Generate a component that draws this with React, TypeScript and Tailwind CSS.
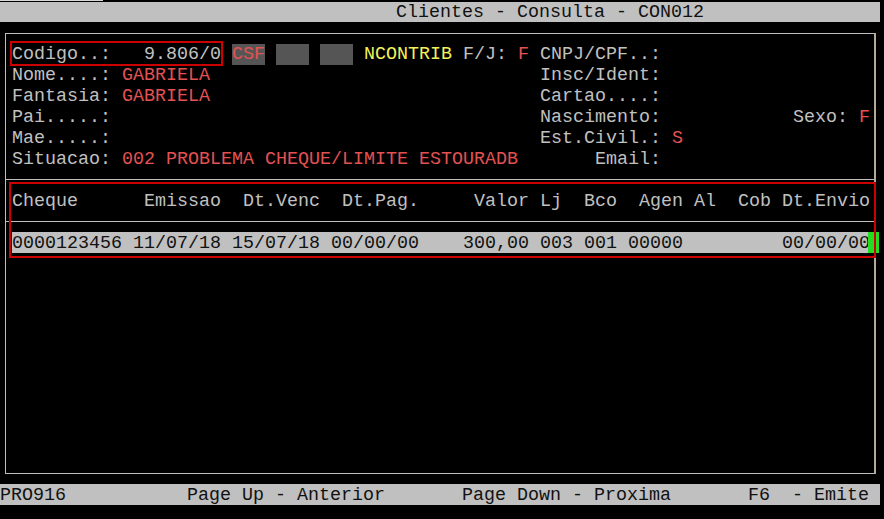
import React from "react";

const sp = (n: number) => " ".repeat(n);

function Line({ children, className = "" }: { children?: React.ReactNode; className?: string }) {
  return <div className={`h-[21px] whitespace-pre pl-[6px] leading-[23px] ${className}`}>{children}</div>;
}

function Red({ children }: { children: React.ReactNode }) {
  return <span className="text-[#e35252]">{children}</span>;
}

function Rule() {
  return (
    <div className="h-[21px] pt-[10px]">
      <div className="h-px bg-[#bdbdbd]" />
    </div>
  );
}

export default function App() {
  return (
    <div className="h-[519px] w-[884px] overflow-hidden bg-black font-['Liberation_Mono','Courier_New',monospace] text-[18.33px] text-[#c0c0c0]">
      <div className="h-[2px]">
        <div className="h-px w-[103px] bg-[#d6d6d6]" />
      </div>

      <div className="h-[20px] w-[880px] whitespace-pre bg-[#c0c0c0] leading-[21px] text-[#111]">
        {sp(36)}Clientes - Consulta - CON012
      </div>

      <div className="ml-[5px] mt-[11px] h-[441px] w-[871px] border-t border-b border-l border-r-2 border-[#bdbdbd] border-r-[#b3ab9a] pt-[9px]">
        <Line>
          <span className="inline-block h-[21px] align-top ring-2 ring-[#cc0000]">{"Codigo..:   9.806/0"}</span>
          {" "}
          <span className="bg-[#555555] text-[#e35252]">CSF</span>
          {" "}
          <span className="bg-[#555555]">{sp(3)}</span>
          {" "}
          <span className="bg-[#555555]">{sp(3)}</span>
          {" "}
          <span className="text-[#f2f25a]">NCONTRIB</span>
          {" F/J: "}
          <Red>F</Red>
          {" CNPJ/CPF..:"}
        </Line>
        <Line>
          {"Nome....: "}
          <Red>GABRIELA</Red>
          {sp(30)}Insc/Ident:
        </Line>
        <Line>
          {"Fantasia: "}
          <Red>GABRIELA</Red>
          {sp(30)}Cartao....:
        </Line>
        <Line>
          {"Pai.....:" + sp(39) + "Nascimento:" + sp(12) + "Sexo: "}
          <Red>F</Red>
        </Line>
        <Line>
          {"Mae.....:" + sp(39) + "Est.Civil.: "}
          <Red>S</Red>
        </Line>
        <Line>
          {"Situacao: "}
          <Red>002 PROBLEMA CHEQUE/LIMITE ESTOURADB</Red>
          {sp(7)}Email:
        </Line>

        <Rule />

        <div className="relative">
          <Line>{"Cheque      Emissao  Dt.Venc  Dt.Pag.     Valor Lj  Bco  Agen Al  Cob Dt.Envio"}</Line>
          <Rule />
          <Line>
            <span className="inline-block h-[21px] bg-[#c0c0c0] align-top text-[#111]">
              {"0000123456 11/07/18 15/07/18 00/00/00    300,00 003 001 00000         00/00/00"}
            </span>
            <span className="-ml-[2px] inline-block h-[21px] w-[11px] bg-[#22dd22] align-top" />
          </Line>
          <div className="absolute -top-[8px] -right-[2px] -bottom-[5px] left-[3px] border-2 border-[#cc0000]" />
        </div>
      </div>

      <div className="mt-[10px] h-[21px] w-[880px] whitespace-pre bg-[#c0c0c0] leading-[23px] text-[#111]">
        {"PRO916" + sp(11) + "Page Up - Anterior" + sp(7) + "Page Down - Proxima" + sp(7) + "F6  - Emite"}
      </div>
    </div>
  );
}
